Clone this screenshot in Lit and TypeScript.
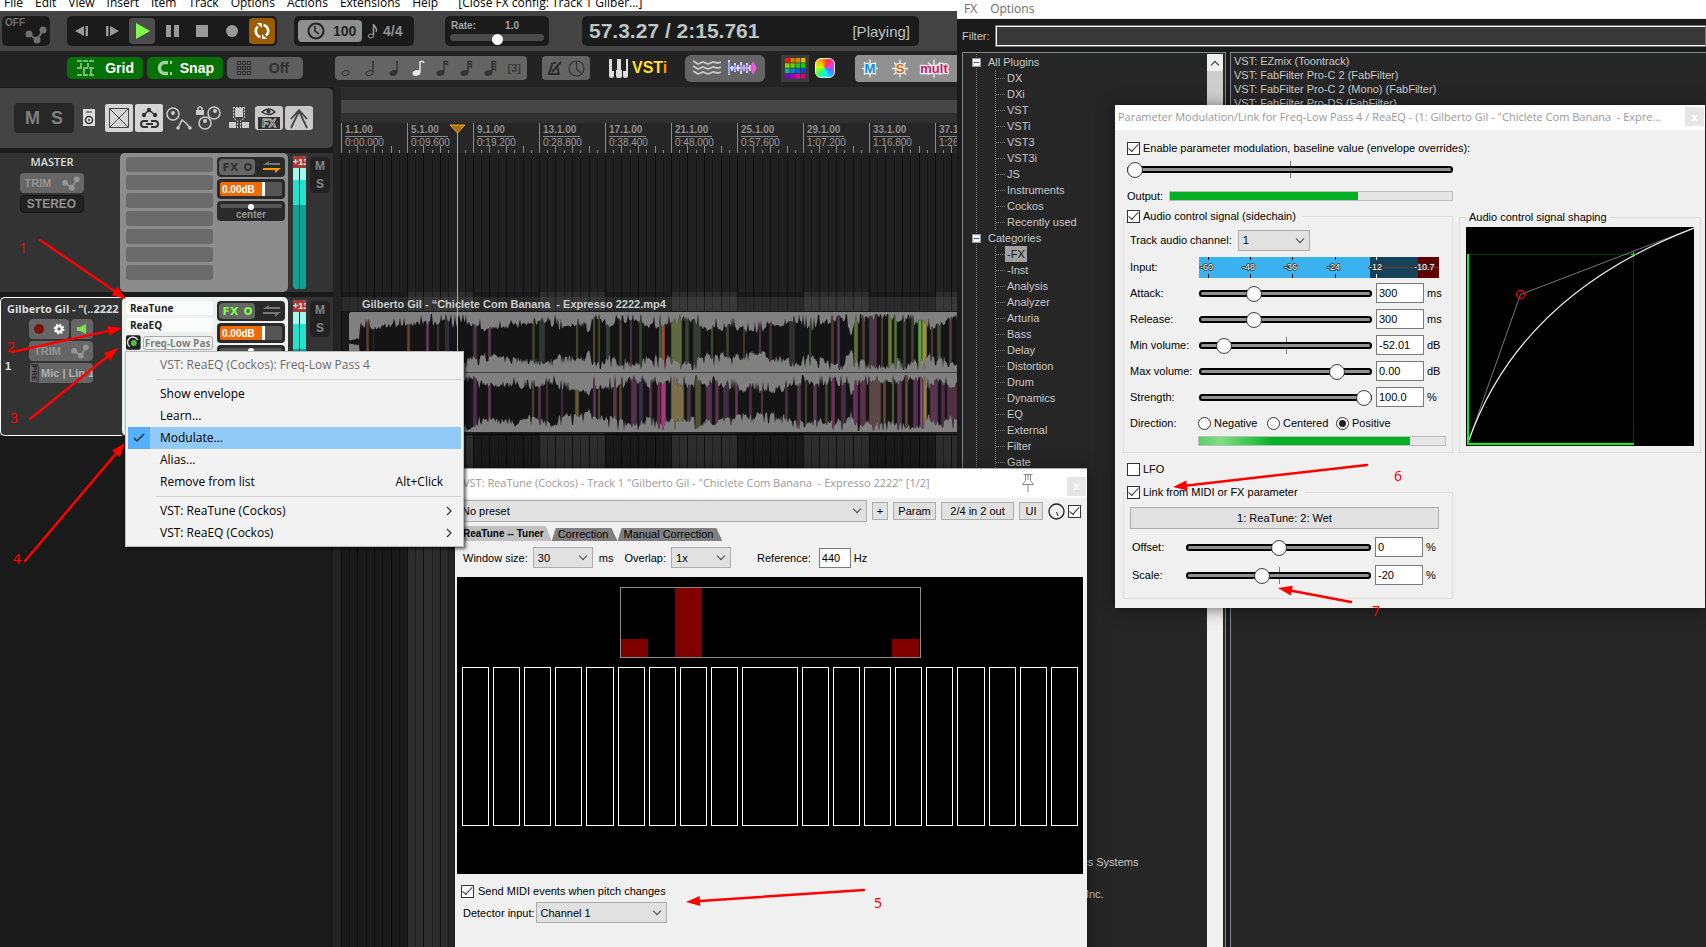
import { LitElement, html, svg, css } from "lit";
import { customElement } from "lit/decorators.js";

const uiStyles = css`
  * { box-sizing: border-box; }
  button, input, select { font: inherit; color: inherit; margin: 0; border-radius: 0; }
  button { padding: 0; border: 0; background: none; }
  .check { appearance: none; width: 13px; height: 13px; flex: none; border: 1px solid #333; background: #fff; display: grid; place-items: center; }
  .check:checked::before { content: ""; width: 4px; height: 9px; border: solid #333; border-width: 0 1px 1px 0; transform: rotate(42deg) translate(-1px, -1px); }
  .radio { appearance: none; width: 13px; height: 13px; flex: none; border: 1px solid #333; border-radius: 50%; background: #fff; display: grid; place-items: center; }
  .radio:checked::before { content: ""; width: 7px; height: 7px; border-radius: 50%; background: #222; }
  .select { position: relative; display: flex; height: 21px; }
  .select select { appearance: none; width: 100%; height: 100%; padding: 0 4px; border: 1px solid #adadad; background: #e1e1e1; }
  .select::after { content: ""; position: absolute; right: 7px; top: 6px; width: 5px; height: 5px; border: solid #444; border-width: 0 1px 1px 0; transform: rotate(45deg); pointer-events: none; }
  .field { height: 20px; width: 48px; border: 1px solid #7a7a7a; background: #fff; padding: 0 2px; }
  .push { border: 1px solid #adadad; background: #e1e1e1; }
  .range { appearance: none; width: 100%; height: 17px; background: none; display: block; }
  .range::-webkit-slider-runnable-track { height: 7px; border-radius: 4px; background: #919191; box-shadow: inset 0 0 0 2px #000; }
  .range::-webkit-slider-thumb { appearance: none; width: 16px; height: 16px; margin-top: -4px; border: 1px solid #444; border-radius: 50%; background: radial-gradient(#fff 40%, #e4e4e4); }
`;

/* ---------- waveform ---------- */

const envelope: [number, number][] = [
  [0, 2], [10, 4], [11, 22], [24, 17], [60, 22], [78, 24], [106, 24], [124, 24], [136, 17], [146, 18], [158, 19], [162, 26],
  [168, 19], [184, 20], [203, 22], [205, 28], [209, 21], [218, 18], [228, 21], [237, 17], [240, 9], [243, 25], [260, 23], [280, 28],
  [293, 24], [298, 18], [308, 24], [330, 27], [350, 25], [358, 17], [364, 23], [374, 16], [384, 22],
  [390, 16], [411, 18], [431, 18], [452, 25], [464, 21], [480, 27], [492, 26], [499, 23], [502, 10], [506, 27],
  [521, 27], [545, 27], [574, 27], [582, 18], [590, 23], [602, 22], [609, 27],
];

function noise(seed: number) {
  let s = seed;
  return () => {
    s = (s * 1664525 + 1013904223) % 4294967296;
    return s / 4294967296;
  };
}

function amplitude(x: number) {
  for (let i = 1; i < envelope.length; i++) {
    const [x1, a1] = envelope[i];
    const [x0, a0] = envelope[i - 1];
    if (x <= x1) return a0 + ((a1 - a0) * (x - x0)) / (x1 - x0);
  }
  return 24;
}

function wave(center: number, seed: number) {
  const rnd = noise(seed);
  const up: string[] = [];
  const down: string[] = [];
  let drift = 0.8;
  for (let x = 0; x <= 609; x++) {
    const a = amplitude(x);
    drift = rnd() > 0.9 ? 0.62 + rnd() * 0.38 : drift;
    const spike = rnd() > 0.86 ? 1.18 : drift + (rnd() - 0.5) * 0.24;
    const spike2 = rnd() > 0.88 ? 1.12 : drift + (rnd() - 0.6) * 0.26;
    up.push(`${x},${(center - Math.min(28, a * spike)).toFixed(1)}`);
    down.unshift(`${x},${(center + Math.min(28, a * spike2)).toFixed(1)}`);
  }
  return up.concat(down).join(" ");
}

const upper = wave(30, 11);
const lower = wave(91, 77);

type Tint = [number, number, string];
const upperTints: Tint[] = [
  [17, 3, "#6b4438"], [24, 1, "#513830"], [58, 3, "#7a4a35"], [77, 3, "#7a4070"], [88, 2, "#4a4232"], [96, 2, "#3f4030"],
  [98, 2, "#3c3a66"], [124, 4, "#553a4f"], [139, 3, "#6b4060"], [183, 3, "#44502f"], [190, 6, "#353b34"], [227, 2, "#6a5f35"],
  [244, 2, "#6a5f35"], [249, 2, "#5f5a30"], [257, 4, "#3b443a"], [270, 3, "#4e4b33"], [281, 2, "#5b3f55"], [290, 3, "#3b5038"],
  [310, 2, "#4aa04a"], [312, 4, "#b85040"], [322, 11, "#6b7848"], [336, 4, "#3e4a38"], [344, 8, "#3d4337"], [362, 2, "#4d6b3d"],
  [377, 3, "#454a3b"], [394, 2, "#55433c"], [410, 2, "#6b3f64"], [420, 3, "#52372e"], [440, 6, "#343434"], [460, 2, "#4a5b33"],
  [482, 3, "#653833"], [488, 3, "#63406b"], [505, 4, "#78803a"], [513, 3, "#574635"], [520, 8, "#553e4e"], [532, 2, "#5d5233"],
  [539, 4, "#7a8a3a"], [545, 3, "#5c8a40"], [554, 3, "#414d35"], [562, 3, "#4a4a37"], [569, 4, "#66c04a"], [573, 5, "#b0a850"],
  [582, 2, "#6a4a45"], [588, 4, "#4c5a3d"], [600, 3, "#534b4b"],
];
const lowerTints: Tint[] = [
  [17, 3, "#6b3f60"], [58, 3, "#6d4560"], [77, 3, "#704070"], [96, 3, "#4b3a66"], [124, 4, "#5c3356"], [139, 3, "#74415f"],
  [183, 2, "#5a6a36"], [189, 3, "#633a5c"], [197, 2, "#4d3f35"], [212, 2, "#54304f"], [226, 4, "#74653a"], [244, 3, "#763a70"],
  [249, 2, "#6a5f35"], [264, 4, "#6a3c48"], [270, 3, "#5d5434"], [282, 6, "#5e3658"], [290, 4, "#3f3358"], [300, 3, "#683c5d"],
  [308, 4, "#7a2a5a"], [312, 5, "#c0408a"], [322, 13, "#8c8050"], [338, 4, "#513e52"], [346, 6, "#5a5c3a"], [357, 6, "#643558"],
  [366, 4, "#683750"], [374, 6, "#4b314a"], [386, 3, "#753b64"], [400, 3, "#5e304f"], [412, 2, "#744048"], [436, 3, "#56364c"],
  [448, 4, "#613d53"], [456, 2, "#5d5634"], [464, 4, "#623c5e"], [476, 3, "#4b5130"], [482, 4, "#803560"], [492, 5, "#50304c"],
  [504, 5, "#7a3470"], [511, 6, "#693650"], [520, 12, "#6b5150"], [534, 3, "#745637"], [543, 2, "#74803a"], [548, 5, "#643b5f"],
  [556, 3, "#77503c"], [564, 5, "#663464"], [571, 3, "#b050a0"], [574, 4, "#a09848"], [581, 8, "#6b385e"], [592, 4, "#593052"],
  [598, 10, "#60364f"],
];

/* ---------- shared icons ---------- */

const nodesIcon = html`<svg width="20" height="15" viewBox="0 0 22 18" fill="none" stroke="currentColor" stroke-width="2">
  <path d="M4 8 L12 14 L18 4" /><g fill="currentColor" stroke="none"><circle cx="4" cy="8" r="3.5" /><circle cx="12" cy="14" r="3.5" /><circle cx="18" cy="4" r="3.5" /></g></svg>`;

const note = (flags: number, open = false, stem = true, color = "#333") => html`<svg width="14" height="17" viewBox="0 0 14 17" fill="none" stroke=${color}>
  <ellipse cx="4.500" cy="13" rx="3.600" ry="2.300" transform="rotate(-18 4.500 13)" fill=${open ? "none" : color} />
  ${stem ? svg`<path d="M8 12 V1" stroke-width="1.500" />` : ""}
  ${Array.from({ length: flags }, (_, i) => svg`<path d=${`M8 ${1.5 + i * 2.5} h3 l1 1.500`} stroke-width="1.300" />`)}
</svg>`;

const burst = (label: string, color: string, width: number) => html`<svg width=${width} height="21" viewBox=${`${-width / 2} -10.500 ${width} 21`}>
  <path d="M0 -9V9M-8 0H8M-6 -6L6 6M-6 6L6 -6" stroke="#eee" stroke-width="1.300" />
  <text y="4.500" text-anchor="middle" font-family="Liberation Sans" font-weight="bold" font-size="13" fill=${color} stroke="#e8e8e8" stroke-width="2.500" paint-order="stroke">${label}</text>
</svg>`;

/* ---------- track panel ---------- */

@customElement("track-strip")
class TrackStrip extends LitElement {
  static properties = { master: { type: Boolean } };
  master = false;

  static styles = [uiStyles, css`
    :host { display: flex; height: 139px; background: #333; font: bold 11px/14px "Liberation Sans", Arial, sans-serif; color: #ddd; }
    .info { width: 120px; border-radius: 5px; display: flex; flex-direction: column; align-items: center; gap: 2px; padding-top: 1px; position: relative; }
    .info.own { border: 1px solid #fff; border-right: 0; border-radius: 5px 0 0 5px; padding: 3px 0 0 6px; width: 122px; align-items: flex-start; gap: 0; }
    .title { height: 16px; line-height: 16px; font-family: "Open Sans", sans-serif; font-weight: 700; }
    .title.m { height: 17px; padding-right: 16px; font-weight: 600; }
    .plain { width: 64px; height: 20px; border-radius: 4px; background: #666; color: #959595; display: flex; align-items: center; justify-content: space-between; padding: 0 3px 0 5px; font: bold 11px "Liberation Sans", sans-serif; }
    .info:not(.own) .plain { margin-right: 17px; }
    .plain.stereo { background: #222; color: #909090; height: 18px; justify-content: center; border: 1px solid #151515; font-size: 12px; padding: 0; }
    .stack { display: flex; flex-direction: column; gap: 2px; margin: 2px 0 0 22px; }
    .pair { display: flex; gap: 2px; }
    .plain.rec { width: 40px; padding: 0 4px; }
    .plain.spk { width: 22px; padding: 0 5px; }
    .pre { writing-mode: vertical-rl; font: bold 8px/8px "Liberation Sans", sans-serif; border: 1px solid #333; border-radius: 2px; height: 19px; width: 10px; color: #222; text-align: center; flex: none; }
    .plain.mic { padding: 0 1px 0 0; justify-content: flex-start; gap: 2px; color: #b0b0b0; white-space: nowrap; overflow: hidden; }
    .num { position: absolute; left: 4px; top: 61px; font-size: 11px; }
    .fx { width: 168px; border-radius: 5px; background: #8c8c8c; padding: 4px 3px 0 6px; display: flex; justify-content: space-between; align-items: flex-start; }
    .fx.own { width: 166px; background: #ecf0ef; padding: 4px 3px 0 4px; }
    .slots { display: flex; flex-direction: column; gap: 3px; width: 87px; }
    .slot { display: block; width: 100%; height: 15px; border-radius: 3px; background: #6b6b6b; text-align: left; }
    .own .slot { height: 14px; background: #fafcfb; color: #222; padding-left: 4px; font: bold 10px/14px "Open Sans", sans-serif; }
    .param { display: flex; gap: 2px; align-items: center; }
    .own .param .slot { width: 72px; border: 1px solid #aaa; color: #808080; padding: 0 0 0 1px; background: #f0f2f1; overflow: hidden; white-space: nowrap; line-height: 12px; }
    .ctl { display: flex; flex-direction: column; gap: 2px; width: 68px; }
    .box { height: 20px; border-radius: 4px; background: #2a2a2a; display: flex; align-items: center; padding: 2px 3px 2px 2px; justify-content: space-between; }
    .fxo { width: 36px; height: 16px; border-radius: 4px; background: #666; color: #333; display: flex; align-items: center; justify-content: center; gap: 5px; font: bold 11px "DejaVu Sans", sans-serif; }
    .fxo.on { color: #7dff4a; }
    .ring { width: 8px; height: 8px; border: 2px solid currentColor; border-radius: 50%; }
    .vol { padding: 3px; justify-content: flex-start; }
    .vol b { background: #ee6a05; color: #fff; width: 42px; height: 14px; line-height: 15px; padding-left: 2px; font-size: 10px; border-radius: 2px 0 0 2px; }
    .vol i { width: 3px; height: 14px; background: #fff; }
    .vol u { flex: 1; height: 14px; background: #555; border-radius: 0 2px 2px 0; }
    .pan { display: block; padding: 3px; text-align: center; color: #959595; font: bold 10px/14px "Liberation Sans", sans-serif; }
    .rail { height: 4px; border-radius: 2px; background: #555; display: grid; place-items: center; }
    .rail::before { content: ""; width: 6px; height: 6px; border-radius: 50%; background: #fff; }
    .meter { width: 13px; height: 133px; margin: 3px 4px 0 5px; border-radius: 3px; overflow: hidden; background: linear-gradient(90deg, transparent 6px, #14302e 6px, #14302e 7px, transparent 7px), linear-gradient(#a5f8ef 24px, #1fe5d0 24px, #1fe5d0 49px, #0aa396 49px); }
    .peak { display: block; height: 12px; background: #a93b33; color: #eee; font: bold 9px/12px "Liberation Sans", sans-serif; overflow: hidden; }
    .ms { width: 20px; height: 36px; margin-top: 4px; border-radius: 4px; background: #222; color: #858585; display: grid; font: bold 12px/16px "Liberation Sans", sans-serif; place-items: center; }
  `];

  render() {
    const own = this.master ? "" : "own";
    return html`
      <div class="info ${own}">
        ${this.master
          ? html`<span class="title m">MASTER</span>
              <button class="plain">TRIM ${nodesIcon}</button>
              <button class="plain stereo">STEREO</button>`
          : html`<span class="title">Gilberto Gil - “(..2222</span>
              <span class="num">1</span>
              <div class="stack">
                <div class="pair">
                  <button class="plain rec" aria-label="Record arm"><svg width="32" height="14" viewBox="0 0 32 14"><circle cx="6" cy="7" r="5" fill="#7b1208" /><circle cx="26" cy="7" r="3" fill="none" stroke="#fff" stroke-width="2.400" /><circle cx="26" cy="7" r="4.600" fill="none" stroke="#fff" stroke-width="1.600" stroke-dasharray="1.800 1.800" /></svg></button>
                  <button class="plain spk" aria-label="Monitor"><svg width="12" height="12" viewBox="0 0 12 12"><path d="M1 4 h3 L10 1 V11 L4 8 H1Z" fill="#7be04d" /></svg></button>
                </div>
                <button class="plain">TRIM ${nodesIcon}</button>
                <button class="plain mic"><span class="pre">PRE</span>Mic | Lin 1</button>
              </div>`}
      </div>
      <div class="fx ${own}">
        <div class="slots">
          ${this.master
            ? Array.from({ length: 7 }, () => html`<button class="slot" aria-label="Empty slot"></button>`)
            : html`<button class="slot">ReaTune</button><button class="slot">ReaEQ</button>
                <div class="param"><svg width="15" height="15" viewBox="0 0 15 15"><rect width="15" height="15" rx="2" fill="#222" /><path d="M4 12 A5.500 5.500 0 1 1 12 5" fill="none" stroke="#ddd" stroke-width="1.500" /><circle cx="8" cy="8" r="3" fill="#4ec83a" /></svg><button class="slot">Freq-Low Pas</button></div>`}
        </div>
        <div class="ctl">
          <div class="box"><button class="fxo ${this.master ? "" : "on"}">FX<span class="ring"></span></button>
            <svg width="20" height="14" viewBox="0 0 20 14"><path d="M1 5 L7 1 V3 H18 V5Z" fill="#777" /><path d="M1 8 H19 L13 13 V10 H1Z" fill=${this.master ? "#f90" : "#777"} /></svg>
          </div>
          <div class="box vol"><b>0.00dB</b><i></i><u></u></div>
          <div class="box pan"><div class="rail"></div>${this.master ? "center" : ""}</div>
        </div>
      </div>
      <div class="meter"><span class="peak">+13</span></div>
      <div class="ms"><span>M</span><span>S</span></div>
    `;
  }
}

/* ---------- main DAW window ---------- */

@customElement("daw-window")
class DawWindow extends LitElement {
  static styles = [uiStyles, css`
    :host { display: flex; flex-direction: column; min-width: 0; overflow: hidden; background: #1a1a1a; font-family: "Liberation Sans", Arial, sans-serif; }
    .menu { height: 11px; background: #fff; display: flex; align-items: flex-end; gap: 12px; padding-left: 4px; overflow: hidden; font: 12px/16px "Open Sans", sans-serif; color: #000; white-space: nowrap; flex: none; }
    .menu .note { margin-left: 8px; }
    .transport { height: 40px; background: #444; display: flex; align-items: flex-start; padding: 5px 0 0 2px; flex: none; }
    .panel { height: 30px; background: #1b1b1b; border-radius: 5px; display: flex; align-items: center; color: #a3a3a3; flex: none; }
    .auto { width: 48px; font: bold 10px/10px "Liberation Sans", sans-serif; color: #707070; padding: 2px 3px; align-items: flex-start; justify-content: space-between; }
    .auto svg { width: 22px; height: 18px; margin: 8px 0 0 -10px; flex: none; }
    .keys { width: 210px; margin-left: 17px; padding: 0 2px; gap: 4px; }
    .key { width: 26px; height: 26px; display: grid; place-items: center; border-radius: 4px; color: #999; }
    .key.play { background: #4c4c4c; }
    .key.loop { background: #9a5c05; }
    .bpm { width: 120px; margin-left: 17px; padding-left: 4px; }
    .tempo { width: 64px; height: 22px; background: #8f8f8f; border-radius: 4px; display: flex; align-items: center; gap: 8px; padding-left: 9px; font: bold 14px "Liberation Sans", sans-serif; color: #222; }
    .sig { font-size: 14px; margin-left: 4px; font-weight: bold; color: #909090; }
    .bpm svg.n { margin-left: 5px; }
    .rate { width: 104px; margin-left: 31px; display: block; padding: 3px 5px; font: bold 10px/13px "Liberation Sans", sans-serif; }
    .rate p { margin: 0 25px 0 1px; display: flex; justify-content: space-between; }
    .rail { height: 7px; border-radius: 4px; background: #4a4a4a; display: grid; place-items: center; margin-top: 2px; }
    .rail::before { content: ""; width: 11px; height: 11px; border-radius: 50%; background: #fff; }
    .clock { flex: 0 1 337px; margin-left: 33px; padding: 0 9px 0 7px; justify-content: space-between; color: #bcc4c4; }
    .time { font: bold 21px "Liberation Sans", sans-serif; }
    .state { font-size: 15px; }
    .tools { height: 36px; background: #232323; display: flex; align-items: center; flex: none; padding: 0 0 2px 67px; }
    .tool { width: 76px; height: 22px; border-radius: 5px; display: flex; align-items: center; justify-content: space-between; padding: 0 9px 0 10px; margin-right: 4px; font: bold 14px "Liberation Sans", sans-serif; color: #fff; background: #067206; flex: none; }
    .tool.off { background: #5e5e5e; color: #303030; padding-right: 14px; }
    .set { height: 24px; border-radius: 4px; background: #646464; display: flex; align-items: center; flex: none; }
    .notes { width: 192px; margin-left: 28px; padding: 0 6px; justify-content: space-between; color: #3a3a3a; font: bold 11px "Liberation Sans", sans-serif; }
    .metro { width: 48px; margin-left: 15px; justify-content: space-evenly; }
    .vsti { margin-left: 19px; display: flex; align-items: center; gap: 3px; font: bold 16px "Liberation Sans", sans-serif; color: #ffdf30; width: 59px; flex: none; }
    .vsti em { color: #f90; font-style: normal; }
    .env { width: 80px; height: 27px; margin-left: 17px; justify-content: space-evenly; border-radius: 6px; }
    .pal { width: 28px; height: 27px; background: #3c3c3c; margin-left: 16px; display: grid; place-items: center; flex: none; }
    .wheel { width: 20px; height: 20px; border-radius: 6px; margin: 0 20px 0 6px; flex: none; background: conic-gradient(from 20deg, #f33, #e3f, #48f, #0ff, #3f6, #cf0, #fa0, #f33); border: 1px solid #eee; }
    .solo { width: 130px; height: 27px; background: #909090; gap: 8px; padding-left: 4px; }
    .body { flex: 1; display: grid; grid-template-columns: 333px minmax(0, 1fr); column-gap: 8px; background: #232323; min-height: 0; }
    .tcp { display: flex; flex-direction: column; gap: 5px; background: #1a1a1a; overflow: hidden; padding-top: 1px; min-height: 0; }
    .head { height: 60px; background: #444; border-radius: 0 5px 5px 0; display: flex; align-items: center; padding-left: 14px; flex: none; }
    track-strip { flex: none; }
    .mix { width: 60px; height: 30px; border-radius: 4px; background: #272727; color: #808080; font: bold 18px "Liberation Sans", sans-serif; display: flex; align-items: center; justify-content: space-evenly; }
    .arr { display: flex; flex-direction: column; min-width: 0; overflow: hidden; position: relative; }
    .b1 { height: 13px; background: #2b2b2b; } .b2 { height: 13px; background: #464646; } .b3 { height: 10px; background: #303030; }
    .b1, .b2, .b3 { flex: none; }
    .ruler { height: 30px; background: #262626; display: flex; flex: none; position: relative; }
    .mark { width: 66px; flex: none; border-left: 1px solid #8a8a8a; padding: 1px 0 0 3px; font: bold 10px/12px "Liberation Sans", sans-serif; color: #8f8f8f; }
    .mark span { display: block; width: 37px; border-bottom: 1px solid #858585; white-space: nowrap; }
    .mark small { font-size: 10px; line-height: 12px; display: block; font-weight: normal; color: #9a9a9a; }
    .ticks { position: absolute; left: 0; bottom: 0; width: 100%; height: 7px; }
    .lanes { flex: 1; position: relative; min-height: 0; }
    .grid { position: absolute; inset: 0; width: 100%; height: 100%; }
    .track { position: relative; padding-top: 144px; }
    .name { height: 14px; padding-left: 21px; font: bold 11px/15px "Liberation Sans", sans-serif; color: #c8ccca; white-space: pre; background: rgba(90, 90, 90, .25); }
    .item { height: 122px; margin-left: 7px; background: #808080; border: solid #1a1a1a; border-width: 1px 0 1px 1px; overflow: hidden; border-radius: 3px 0 0 0; }
    .item svg { display: block; }
    .cursor { position: absolute; left: 108px; top: 37px; width: 17px; height: 830px; pointer-events: none; }
  `];

  render() {
    return html`
      <nav class="menu">${["File", "Edit", "View", "Insert", "Item", "Track", "Options", "Actions", "Extensions", "Help"].map((t) => html`<span>${t}</span>`)}<span class="note">[Close FX config: Track 1 Gilber...]</span></nav>
      <div class="transport">
        <div class="panel auto">OFF ${nodesIcon}</div>
        <div class="panel keys">
          <button class="key" aria-label="Start"><svg width="14" height="12" viewBox="0 0 14 12" fill="currentColor"><path d="M9 1 V11 L0 6Z M10.500 1 h2.500 V11 h-2.500Z" /></svg></button>
          <button class="key" aria-label="End"><svg width="14" height="12" viewBox="0 0 14 12" fill="currentColor"><path d="M5 1 V11 L14 6Z M1 1 h2.500 V11 h-2.500Z" /></svg></button>
          <button class="key play" aria-label="Play"><svg width="16" height="16" viewBox="0 0 16 16"><path d="M2 0 L16 8 L2 16Z" fill="#7dff4a" /></svg></button>
          <button class="key" aria-label="Pause"><svg width="13" height="12" viewBox="0 0 13 12" fill="currentColor"><path d="M0 0h5v12H0Z M8 0h5v12H8Z" /></svg></button>
          <button class="key" aria-label="Stop"><svg width="12" height="12"><rect width="12" height="12" fill="#999" /></svg></button>
          <button class="key" aria-label="Record"><svg width="12" height="12"><circle cx="6" cy="6" r="6" fill="#999" /></svg></button>
          <button class="key loop" aria-label="Repeat"><svg width="18" height="18" viewBox="0 0 18 18" fill="none" stroke="#fff" stroke-width="2.600"><path d="M7.500 15 A6 6 0 0 1 5 4.500 M10.500 3 A6 6 0 0 1 13 13.500" /><path d="M4 1 h5 v5z M14 17 h-5 v-5z" fill="#fff" stroke="none" /></svg></button>
        </div>
        <div class="panel bpm">
          <span class="tempo"><svg width="18" height="18" viewBox="0 0 18 18" fill="none" stroke="#222" stroke-width="2"><circle cx="9" cy="9" r="7.500" /><path d="M8 4 V9 L12 12" stroke-width="1.500" /></svg>100</span>
          <svg class="n" width="12" height="17" viewBox="0 0 12 17" fill="none" stroke="#999"><ellipse cx="4" cy="13" rx="2.800" ry="2" /><path d="M6.500 12 V1 C7 4 11 5 9 9" stroke-width="1.500" /></svg>
          <span class="sig">4/4</span>
        </div>
        <div class="panel rate"><p><span>Rate:</span><span>1.0</span></p><div class="rail"></div></div>
        <div class="panel clock"><span class="time">57.3.27 / 2:15.761</span><span class="state">[Playing]</span></div>
      </div>
      <div class="tools">
        <button class="tool"><svg width="17" height="16" viewBox="0 0 17 16" fill="none" stroke="#9fd49f" stroke-width="1.500"><path d="M0 1H17M0 8H17M0 15H17" stroke-dasharray="5 1" /><path d="M4 3v4M11 3v4M7 9v5M14 9v5" /></svg>Grid</button>
        <button class="tool"><svg width="17" height="16" viewBox="0 0 17 16" fill="none" stroke="#9fd49f" stroke-width="3.500"><path d="M11 2.500 H8 A5.500 5.500 0 0 0 8 13.500 H11" /><path d="M13 2.500h3M13 13.500h3" stroke-width="3" stroke-dasharray="2 1" /></svg>Snap</button>
        <button class="tool off"><svg width="15" height="15" viewBox="0 0 15 15" fill="none" stroke="#2c2c2c">${[1, 6, 11].map((y) => [1, 6, 11].map((x) => svg`<rect x=${x - 0.5} y=${y - 0.5} width="3" height="3" />`))}</svg>Off</button>
        <div class="set notes">${note(0, true, false)}${note(0, true)}${note(0)}${note(1, false, true, "#e8e8e8")}${note(2)}${note(3)}${note(4)}<span>[3]</span></div>
        <div class="set metro"><svg width="16" height="16" viewBox="0 0 16 16" fill="none" stroke="#2c2c2c" stroke-width="2"><path d="M5.500 3 L2 14 H12 L10 7 M6 3h3 M5 12 L14 2" /></svg><svg width="17" height="17" viewBox="0 0 17 17" fill="none" stroke="#333" stroke-width="1.200"><circle cx="8.500" cy="8.500" r="7.500" /><path d="M8.500 2 V9 L13 13" /></svg></div>
        <div class="vsti"><svg width="20" height="19" viewBox="0 0 20 19" fill="#ddd"><path d="M0 0h3v12h2v5q0 2-2.500 2T0 17Z M8 0h4v11h1v6q0 2-3 2t-3-2v-6h1Z M17 0h2v17q0 2-2.500 2T14 17v-5h3Z" /></svg><span>VST<em>i</em></span></div>
        <div class="set env">
          <svg width="28" height="17" viewBox="0 0 28 17" fill="none" stroke="#c8c8c8" stroke-width="1.800">${[3, 8, 13].map((y) => svg`<path d=${`M0 ${y - 2} l5 3 5-2 5 2 5-2 5 1 3-1`} />`)}</svg>
          <svg width="29" height="20" viewBox="0 0 29 20"><path d="M1 2v15M4 8v5M7 5v9M10 7v6M13 4v12M16 7v6M19 5v10M22 7v6M0 10h28" stroke="#d9cfff" stroke-width="2" /><path d="M1 4v12M7 7v6" stroke="#48f" /><path d="M13 7v6M16 8v4M19 7v6" stroke="#86e" /><path d="M25 3 L29 10 L25 17 L22 10Z" fill="#e05fd0" /></svg>
        </div>
        <div class="pal"><svg width="21" height="21" viewBox="0 0 21 21">${["#f11", "#d70", "#d80", "#db0", "#9c0", "#6c0", "#2c2", "#0d0", "#0b8", "#08c", "#06d", "#04e", "#70d", "#a0c", "#e0a", "#d06"].map((c, i) => svg`<rect x=${(i % 4) * 5.3} y=${Math.floor(i / 4) * 5.3} width="4.500" height="4.500" fill=${c} />`)}</svg></div>
        <div class="wheel"></div>
        <div class="set solo">${burst("M", "#0f8be0", 22)}${burst("S", "#c36d10", 22)}${burst("mult", "#c52169", 30)}${burst("✕", "#c52130", 14)}</div>
      </div>
      <div class="body">
        <div class="tcp">
          <div class="head">
            <div class="mix"><span>M</span><span>S</span></div>
            <svg width="245" height="32" viewBox="0 0 245 32" fill="none">
              <rect x="9" y="7" width="12" height="17" fill="#ddd" /><path d="M12 10h6" stroke="#333" /><circle cx="15" cy="18" r="3.500" stroke="#333" stroke-width="1.500" /><circle cx="15" cy="18" r="1" fill="#333" />
              <rect x="31" y="2" width="28" height="28" rx="2" fill="#d5d5d5" /><path d="M35.500 6.500h19v19h-19z M35.500 6.500l19 19 M54.500 6.500l-19 19" stroke="#444" />
              <rect x="61" y="2" width="28" height="28" rx="2" fill="#d5d5d5" /><path d="M70 13l5-5 6 5" stroke="#333" stroke-width="1.500" /><g fill="#333"><circle cx="70" cy="13" r="2.200" /><circle cx="75" cy="8" r="2.200" /><circle cx="81" cy="13" r="2.200" /></g><path d="M74 19h-4a3 3 0 0 0 0 6h4 M77 19h4a3 3 0 0 1 0 6h-4 M72 22h7" stroke="#333" stroke-width="2" />
              <g stroke="#ccc" stroke-width="1.500"><circle cx="99" cy="12" r="6" /><path d="M104 26l4-8 4 3 4 5" /><circle cx="131" cy="21" r="6" /><circle cx="140" cy="11" r="6" /><path d="M124 9v-3q2-2.500 4 0v3" /></g><g fill="#ccc"><circle cx="99" cy="11" r="2" /><circle cx="131" cy="19" r="2" /><circle cx="141" cy="9" r="2" /><rect x="122" y="8" width="8" height="5" /><circle cx="104" cy="26" r="1.800" /><circle cx="116" cy="26" r="1.800" /></g>
              <g fill="#ccc"><rect x="161" y="6" width="8" height="9" /><rect x="155" y="20" width="7" height="6" /><rect x="168" y="20" width="7" height="6" /></g><path d="M159.500 5v11l4 3v7 M170.500 5v11l-4 3v7 M159 5.500h12" stroke="#ccc" stroke-dasharray="2 1" />
              <rect x="181" y="4" width="28" height="24" rx="3" fill="#c8c8c8" /><rect x="184" y="15" width="22" height="12" fill="#333" /><path d="M188 10q7-6 13 0q-6 5-13 0Z" stroke="#333" stroke-width="1.500" /><circle cx="194.500" cy="9.500" r="2" fill="#333" />
              <text x="188" y="25" font-size="11" font-weight="bold" fill="#333" stroke="#bbb" stroke-width=".8" font-family="Liberation Sans">FX</text>
              <rect x="211" y="4" width="28" height="24" rx="3" fill="#c8c8c8" /><path d="M217 17 L225 8 L233 17 M217 26 L225 9 L233 26" stroke="#444" stroke-width="1.800" />
            </svg>
          </div>
          <track-strip master></track-strip>
          <track-strip></track-strip>
        </div>
        <div class="arr">
          <div class="b1"></div><div class="b2"></div><div class="b3"></div>
          <div class="ruler">
            ${[["1.1.00", "0:00.000"], ["5.1.00", "0:09.600"], ["9.1.00", "0:19.200"], ["13.1.00", "0:28.800"], ["17.1.00", "0:38.400"], ["21.1.00", "0:48.000"], ["25.1.00", "0:57.600"], ["29.1.00", "1:07.200"], ["33.1.00", "1:16.800"], ["37.1.00", "1:26.400"]].map(([a, b]) => html`<div class="mark"><span>${a}</span><small>${b}</small></div>`)}
            <svg class="ticks"><defs><pattern id="t" width="66" height="7" patternUnits="userSpaceOnUse"><path d="M8.500 4v3M25.500 4v3M41.500 4v3M58.500 4v3M16.500 0v7M33.500 0v7M50.500 0v7" stroke="#8a8a8a" /></pattern></defs><rect width="100%" height="7" fill="url(#t)" /></svg>
          </div>
          <div class="lanes">
            <svg class="grid">
              <defs>
                <pattern id="bars" width="66" height="10" patternUnits="userSpaceOnUse"><path d="M8.500 0v10M25.500 0v10M41.500 0v10M58.500 0v10" stroke="#000" stroke-opacity=".28" /><path d="M.500 0v10M16.500 0v10M33.500 0v10M50.500 0v10" stroke="#000" stroke-opacity=".62" /></pattern>
                <pattern id="bands" width="132" height="10" patternUnits="userSpaceOnUse"><rect width="66" height="10" fill="#1a1a1a" /><rect x="66" width="66" height="10" fill="#2d2d2d" /></pattern>
              </defs>
              <rect width="100%" height="139" fill="#202020" /><rect y="139" width="100%" height="900" fill="url(#bands)" /><rect width="100%" height="100%" fill="url(#bars)" />
              <path d="M0 281.500H700" stroke="#000" />
            </svg>
            <div class="track">
              <div class="name">Gilberto Gil - “Chiclete Com Banana  - Expresso 2222.mp4</div>
              <div class="item">
                <svg width="609" height="120" viewBox="0 0 609 120">
                  <defs><clipPath id="u"><polygon points=${upper} /></clipPath><clipPath id="l"><polygon points=${lower} /></clipPath></defs>
                  <polygon points=${upper} fill="#141414" /><polygon points=${lower} fill="#141414" />
                  <g clip-path="url(#u)" opacity=".85">${upperTints.map(([x, w, c]) => svg`<rect x=${x} y="2" width=${w} height="55" fill=${c} /><path d=${`M${x} 2V57M${x + w} 2V57`} stroke="#222" stroke-width=".6" />`)}</g>
                  <g clip-path="url(#l)" opacity=".85">${lowerTints.map(([x, w, c]) => svg`<rect x=${x} y="63" width=${w} height="56" fill=${c} /><path d=${`M${x} 63V119M${x + w} 63V119`} stroke="#222" stroke-width=".6" />`)}</g>
                  <path d="M0 60.500H609" stroke="#444" />
                </svg>
              </div>
            </div>
          </div>
          <svg class="cursor" viewBox="0 0 17 830"><path d="M8.500 8V830" stroke="#f5a21c" /><path d="M1 1H16L8.500 9Z" fill="#a9701a" stroke="#f5a21c" /></svg>
        </div>
      </div>
    `;
  }
}

/* ---------- FX browser ---------- */

@customElement("fx-browser")
class FxBrowser extends LitElement {
  static styles = [uiStyles, css`
    :host { display: flex; flex-direction: column; min-width: 0; overflow: hidden; background: #1b1b1b; font: 11px/16px "Liberation Sans", Arial, sans-serif; color: #c8c8c8; }
    .menu { height: 19px; flex: none; background: #fff; border-bottom: 1px solid #eee; display: flex; gap: 13px; padding-left: 7px; color: #6d6d6d; font: 12px/17px "Open Sans", sans-serif; }
    .filter { display: flex; align-items: center; gap: 5px; padding: 6px 0 5px 5px; height: 33px; flex: none; }
    .filter input { flex: 1; height: 22px; min-width: 0; background: #383838; border: 2px solid #fff; outline: 1px solid #777; outline-offset: -1px; border-right: 0; }
    .panes { flex: 1; display: flex; gap: 4px; padding-left: 5px; min-height: 0; }
    .tree { width: 264px; border: 1px solid #828790; border-bottom: 0; background: #262626; display: flex; justify-content: space-between; padding: 1px 2px 0 9px; overflow: hidden; }
    ul { list-style: none; margin: 0; padding: 0; }
    .top { display: flex; align-items: center; height: 16px; gap: 7px; }
    .box { width: 9px; height: 9px; background: #fff; border: 1px solid #999; display: grid; place-items: center; }
    .box::before { content: ""; width: 5px; height: 1px; background: #35a; }
    .root { background: repeating-linear-gradient(#777 0 1px, transparent 1px 2px) 4px 0 / 1px 100% no-repeat; }
    .kids { margin-left: 23px; border-left: 1px dotted #777; }
    .kids li { height: 16px; display: flex; align-items: center; white-space: nowrap; }
    .kids li::before { content: ""; width: 9px; border-top: 1px dotted #777; }
    .kids li span { padding: 0 2px; }
    .kids li.gap::before { visibility: hidden; }
    .sel span { background: #a0a0a0; color: #111; }
    .bar { width: 16px; background: linear-gradient(#f0f0f0 17px, #cdcdcd 17px, #cdcdcd 330px, #f0f0f0 330px); position: relative; }
    .bar::before { content: ""; position: absolute; left: 5px; top: 8px; width: 5px; height: 5px; border: solid #333; border-width: 1px 0 0 1px; transform: rotate(45deg); }
    .list { flex: 1; min-width: 0; border: 1px solid #828790; border-right: 0; border-bottom: 0; background: #262626; padding: 1px 3px; line-height: 14px; white-space: nowrap; }
  `];

  render() {
    const plugins = ["DX", "DXi", "VST", "VSTi", "VST3", "VST3i", "JS", "Instruments", "Cockos", "Recently used"];
    const cats = ["-FX", "-Inst", "Analysis", "Analyzer", "Arturia", "Bass", "Delay", "Distortion", "Drum", "Dynamics", "EQ", "External", "Filter", "Gate", ...Array(24).fill(""), "Applied Acoustics Systems", "", "Audio Damage, Inc.", "", "", ""];
    return html`
      <nav class="menu"><span>FX</span><span>Options</span></nav>
      <div class="filter"><label for="f">Filter:</label><input id="f" type="text" /></div>
      <div class="panes">
        <div class="tree">
          <ul>
            <li class="root"><div class="top"><span class="box"></span>All Plugins</div><ul class="kids">${plugins.map((p) => html`<li><span>${p}</span></li>`)}</ul></li>
            <li class="root"><div class="top"><span class="box"></span>Categories</div><ul class="kids">${cats.map((p, i) => html`<li class=${i === 0 ? "sel" : p ? "" : "gap"}><span>${p}</span></li>`)}</ul></li>
          </ul>
          <div class="bar"></div>
        </div>
        <div class="list">${["VST: EZmix (Toontrack)", "VST: FabFilter Pro-C 2 (FabFilter)", "VST: FabFilter Pro-C 2 (Mono) (FabFilter)", "VST: FabFilter Pro-DS (FabFilter)"].map((t) => html`<div>${t}</div>`)}</div>
      </div>
    `;
  }
}

/* ---------- ReaTune window ---------- */

@customElement("tuner-window")
class TunerWindow extends LitElement {
  static styles = [uiStyles, css`
    :host { display: flex; flex-direction: column; background: #f0f0f0; font: 11px/14px "Liberation Sans", Arial, sans-serif; color: #000; box-shadow: 0 2px 14px rgba(0, 0, 0, .5); border-top: 1px solid #aaa; }
    .title { height: 29px; background: #fff; display: flex; align-items: center; padding: 0 1px 2px 8px; font: 11px/20px "Open Sans", sans-serif; color: #999; white-space: pre; }
    .title span { flex: 1; overflow: hidden; }
    .x { width: 19px; height: 19px; margin: 7px 0 0 31px; background: #e6e6e6; color: #fff; font: bold 11px "Liberation Sans", sans-serif; }
    .preset { display: flex; align-items: center; padding: 2px 6px 0 0; gap: 5px; }
    .preset .select { flex: 1; height: 22px; }
    .preset .select select { padding-left: 6px; }
    .preset button { height: 18px; }
    .w1 { width: 16px; } .w2 { width: 43px; } .w3 { width: 73px; } .w4 { width: 24px; }
    .preset .check { margin-left: -2px; }
    .tabs { display: flex; align-items: flex-end; height: 16px; margin-top: 3px; }
    .tabs button { height: 13px; line-height: 13px; background: #808080; padding: 0 9px 0 6px; clip-path: polygon(4px 0, calc(100% - 6px) 0, 100% 100%, 0 100%); }
    .tabs .on { height: 15px; background: #c0c0c0; font: bold 10px/15px "Liberation Sans", sans-serif; padding: 0 8px; clip-path: polygon(0 0, calc(100% - 6px) 0, 100% 100%, 0 100%); }
    .opts { display: flex; align-items: center; padding-left: 8px; height: 21px; margin: 6px 0 9px; }
    .opts .select { width: 60px; margin: 0 6px 0 5px; }
    .opts .ov { margin-left: 11px; }
    .opts .rf { margin: 0 8px 0 20px; }
    .opts .field { width: 32px; margin-right: 3px; }
    .view { margin: 0 4px 0 2px; background: #000; height: 297px; padding: 10px 5px 0; display: flex; flex-direction: column; align-items: center; gap: 9px; }
    .hist { width: 301px; height: 71px; border: 1px solid #8a8a8a; display: grid; grid-template-columns: repeat(11, 1fr); align-items: end; flex: none; }
    .hist i { background: #800000; }
    .low { height: 18px; } .high { height: 100%; }
    .keys { width: 100%; height: 159px; display: flex; gap: 4px; }
    .keys i { flex: 27 1 0; border: 1px solid #fff; }
    .keys i.wide { flex-grow: 58; }
    .foot { display: flex; align-items: center; gap: 4px; padding-left: 6px; }
    .foot.a { margin-top: 10px; height: 14px; }
    .foot.b { margin-top: 4px; padding-left: 8px; gap: 1px; }
    .foot.b .select { width: 131px; }
  `];

  render() {
    return html`
      <div class="title"><span>VST: ReaTune (Cockos) - Track 1 "Gilberto Gil - "Chiclete Com Banana  - Expresso 2222" [1/2]</span>
        <svg width="16" height="20" viewBox="0 0 16 20" fill="none" stroke="#888"><path d="M3.500 1.500h9M5.500 1.500v6l-3 4h11l-3-4v-6M8 11.500V19M8 2v5" /></svg><button class="x" aria-label="Close">x</button></div>
      <div class="preset">
        <div class="select"><select aria-label="Preset"><option>No preset</option></select></div>
        <button class="push w1">+</button><button class="push w2">Param</button><button class="push w3">2/4 in 2 out</button><button class="push w4">UI</button>
        <svg width="17" height="17" viewBox="0 0 17 17" fill="none" stroke="#222"><circle cx="8.500" cy="8.500" r="7.500" stroke-width="1.300" /><path d="M8.500 9l1.500 4" /></svg>
        <input class="check" type="checkbox" checked aria-label="Enabled" />
      </div>
      <div class="tabs"><button class="on">ReaTune -- Tuner</button><button>Correction</button><button>Manual Correction</button></div>
      <div class="opts">
        <label for="ws">Window size:</label><div class="select"><select id="ws"><option>30</option></select></div>ms
        <label class="ov" for="ov">Overlap:</label><div class="select"><select id="ov"><option>1x</option></select></div>
        <label class="rf" for="rf">Reference:</label><input class="field" id="rf" .value=${"440"} />Hz
      </div>
      <div class="view">
        <div class="hist"><i class="low"></i><b></b><i class="high"></i><b></b><b></b><b></b><b></b><b></b><b></b><b></b><i class="low"></i></div>
        <div class="keys">${Array.from({ length: 19 }, (_, i) => html`<i class=${i === 9 ? "wide" : ""}></i>`)}</div>
      </div>
      <div class="foot a"><input class="check" id="sm" type="checkbox" checked /><label for="sm">Send MIDI events when pitch changes</label></div>
      <div class="foot b"><label for="di">Detector input:</label><div class="select"><select id="di"><option>Channel 1</option></select></div></div>
    `;
  }
}

/* ---------- parameter modulation dialog ---------- */

@customElement("modulation-dialog")
class ModulationDialog extends LitElement {
  static styles = [uiStyles, css`
    :host { display: block; background: #f0f0f0; font: 11px/14px "Liberation Sans", Arial, sans-serif; color: #000; box-shadow: 0 2px 14px rgba(0, 0, 0, .5); }
    .title { height: 25px; background: #fff; display: flex; align-items: center; justify-content: space-between; padding: 0 1px 2px 3px; font: 11px/20px "Open Sans", sans-serif; color: #999; white-space: pre; }
    .title span { flex: 1; overflow: hidden; text-overflow: ellipsis; }
    .x { width: 19px; height: 19px; margin-left: 2px; background: #e6e6e6; color: #fff; font: bold 11px "Liberation Sans", sans-serif; }
    .body { display: grid; grid-template-columns: 330px minmax(0, 1fr); gap: 6px; padding: 11px 4px 9px 8px; }
    .tick { display: flex; align-items: center; gap: 3px; height: 14px; white-space: nowrap; }
    .in { margin-left: 4px; }
    .main { margin: 6px 0 11px 4px; }
    .slider { position: relative; }
    .mid::before { content: ""; position: absolute; left: 50%; top: 0; width: 1px; height: 17px; background: #777; }
    .mid .range { position: relative; }
    .out { display: flex; align-items: center; height: 14px; gap: 6px; margin: 0 0 6px 4px; }
    .bar { height: 10px; border: 1px solid #bcbcbc; background: #e6e6e6; display: flex; }
    .out .bar { flex: 1; }
    .bar i { background: #06b025; }
    .o { width: 66.6%; }
    .bar .d { width: 85.6%; background: linear-gradient(90deg, #55d066, #80e080 10%, #06b025 35%); }
    fieldset { margin: 0; padding: 6px 6px 0; border: 1px solid #dcdcdc; min-width: 0; }
    legend { padding: 0 7px 0 3px; margin-left: -6px; height: 14px; }
    legend.s { padding: 0 3px; margin-left: 0; }
    .line { display: flex; align-items: center; height: 22px; margin-bottom: 3px; }
    .line .select { width: 72px; margin-left: 6px; }
    .row { display: grid; grid-template-columns: 69px 173px 48px auto; align-items: center; height: 26px; }
    .row > :nth-child(3) { margin-left: 4px; }
    .row > :nth-child(4) { margin-left: 7px; }
    .meter { width: 240px; height: 21px; display: block; }
    .dir { display: flex; height: 26px; align-items: center; }
    .dir > span:first-child { width: 68px; }
    .dir label { display: flex; align-items: center; gap: 3px; width: 69px; }
    .dbar { width: 248px; margin: 0 0 6px 68px; }
    .lfo { margin: 9px 0 9px 4px; }
    .link { padding-bottom: 9px; padding-top: 8px; }
    .wet { width: 309px; height: 22px; display: block; margin-bottom: 4px; }
    .link .row { grid-template-columns: 54px 185px 48px auto; height: 28px; padding-left: 2px; }
    .right { padding-top: 69px; }
    .right fieldset { padding: 3px 6px 6px; }
    .curve { display: block; width: 100%; height: 219px; background: #000; }
  `];

  row(id: string, label: string, pos: number, value: string, unit: string, mid = false) {
    return html`<div class="row"><label for=${id}>${label}</label>
      <div class="slider ${mid ? "mid" : ""}"><input class="range" type="range" min="0" max="1000" .value=${String(pos)} aria-label=${label} /></div>
      <input class="field" id=${id} .value=${value} /><span>${unit}</span></div>`;
  }

  render() {
    return html`
      <div class="title"><span>Parameter Modulation/Link for Freq-Low Pass 4 / ReaEQ - (1: Gilberto Gil - "Chiclete Com Banana  - Expre...</span><button class="x" aria-label="Close">x</button></div>
      <div class="body">
        <div>
          <div class="tick in"><input class="check" id="en" type="checkbox" checked /><label for="en">Enable parameter modulation, baseline value (envelope overrides):</label></div>
          <div class="slider mid main"><input class="range" type="range" min="0" max="1000" .value=${"0"} aria-label="Baseline" /></div>
          <div class="out">Output:<div class="bar"><i class="o"></i></div></div>
          <fieldset>
            <legend class="tick"><input class="check" id="ac" type="checkbox" checked /><label for="ac">Audio control signal (sidechain)</label></legend>
            <div class="line"><label for="ch">Track audio channel:</label><div class="select"><select id="ch"><option>1</option></select></div></div>
            <div class="row"><span>Input:</span>
              <svg class="meter" viewBox="0 0 240 21"><rect width="171" height="21" fill="#3bb2f0" /><rect x="171" width="48" height="21" fill="#15445a" /><rect x="219" width="21" height="21" fill="#600000" /><path d="M171 10.500H240" stroke="#733" />
                ${[9, 51, 93, 136, 177].map((x) => svg`<path d=${`M${x}.500 0v3M${x}.500 17v4`} stroke=${x < 170 ? "#000" : "#fff"} />`)}
                <g font-family="Liberation Sans" font-size="9" fill="#fff" stroke="#333" stroke-width="1.600" paint-order="stroke"><text x="1" y="13">-60</text><text x="43" y="13">-48</text><text x="85" y="13">-36</text><text x="128" y="13">-24</text><text x="170" y="13">-12</text><text x="215" y="13">-10.7</text></g>
              </svg></div>
            ${this.row("at", "Attack:", 300, "300", "ms")}
            ${this.row("re", "Release:", 300, "300", "ms")}
            ${this.row("mi", "Min volume:", 108, "-52.01", "dB", true)}
            ${this.row("ma", "Max volume:", 828, "0.00", "dB")}
            ${this.row("st", "Strength:", 1000, "100.0", "%")}
            <div class="dir"><span>Direction:</span>
              <label><input class="radio" type="radio" name="dir" />Negative</label><label><input class="radio" type="radio" name="dir" />Centered</label><label><input class="radio" type="radio" name="dir" checked />Positive</label></div>
            <div class="bar dbar"><i class="d"></i></div>
          </fieldset>
          <div class="tick lfo"><input class="check" id="lfo" type="checkbox" /><label for="lfo">LFO</label></div>
          <fieldset class="link">
            <legend class="tick"><input class="check" id="lk" type="checkbox" checked /><label for="lk">Link from MIDI or FX parameter</label></legend>
            <button class="push wet">1: ReaTune: 2: Wet</button>
            ${this.row("of", "Offset:", 500, "0", "%")}
            ${this.row("sc", "Scale:", 400, "-20", "%", true)}
          </fieldset>
        </div>
        <div class="right">
          <fieldset>
            <legend class="s">Audio control signal shaping</legend>
            <svg class="curve" viewBox="0 0 228 219" preserveAspectRatio="none" fill="none">
              <path d="M1 27.500H167.500V216" stroke="#083c08" /><path d="M3 213L54.500 67.500L228 1" stroke="#777" /><path d="M3 213Q54.500 67.500 228 1" stroke="#eee" stroke-width="1.200" />
              <path d="M2 27V217H168" stroke="#0f0" stroke-width="2" /><path d="M165 27.500h5M167.500 25v5" stroke="#0f0" /><circle cx="54.500" cy="67.500" r="4" stroke="#e00" stroke-width="1.300" />
            </svg>
          </fieldset>
        </div>
      </div>
    `;
  }
}

/* ---------- desktop ---------- */

@customElement("app-root")
class AppRoot extends LitElement {
  static styles = [uiStyles, css`
    :host { display: grid; grid-template-columns: minmax(0, 957fr) minmax(0, 749fr); height: 100vh; min-height: 600px; position: relative; overflow: hidden; }
    tuner-window { position: absolute; left: 455px; top: 468px; width: 632px; height: 520px; }
    modulation-dialog { position: absolute; left: 1115px; top: 105px; width: 590px; }
    .ctx { position: absolute; left: 125px; top: 351px; width: 339px; background: #f2f2f2; border: 1px solid #bbb; padding: 2px; box-shadow: 2px 2px 3px rgba(0, 0, 0, .6); font: 12px/22px "Open Sans", sans-serif; color: #000; }
    .ctx button { display: flex; width: 100%; height: 22px; align-items: center; padding: 0 9px 0 0; text-align: left; }
    .ctx button svg { flex: none; }
    .mark { width: 22px; height: 22px; margin-right: 10px; display: grid; place-items: center; }
    .ctx .hot { background: #91c9f7; }
    .hot .mark { background: #56b0fa; }
    .lbl { flex: 1; }
    .ctx .head { color: #6d6d6d; }
    .keyhint { padding-right: 9px; }
    hr { margin: 3px 0 3px 28px; border: 0; border-top: 1px solid #d0d0d0; }
    .notes { position: absolute; left: 0; top: 0; width: 1706px; height: 947px; pointer-events: none; }
  `];

  arrow(x1: number, y1: number, x2: number, y2: number) {
    const a = Math.atan2(y2 - y1, x2 - x1);
    const p = (d: number, s: number) => `${(x2 - Math.cos(a) * d - Math.sin(a) * s).toFixed(1)},${(y2 - Math.sin(a) * d + Math.cos(a) * s).toFixed(1)}`;
    return svg`<path d=${`M${x1} ${y1}L${p(10, 0)}`} stroke="#f00" stroke-width="2.500" stroke-linecap="round" /><polygon points=${`${x2},${y2} ${p(14, 5)} ${p(14, -5)}`} fill="#f00" />`;
  }

  render() {
    const chevron = html`<svg width="6" height="10" viewBox="0 0 6 10" fill="none" stroke="#333" stroke-width="1.200"><path d="M1 1l4 4-4 4" /></svg>`;
    const item = (t: string, extra: unknown = "") => html`<button><span class="mark"></span><span class="lbl">${t}</span>${extra}</button>`;
    const labels: [string, number, number][] = [["1", 19, 253], ["2", 7, 352], ["3", 10, 423], ["4", 13, 564], ["5", 874, 908], ["6", 1394, 481], ["7", 1372, 616]];
    return html`
      <daw-window></daw-window>
      <fx-browser></fx-browser>
      <tuner-window></tuner-window>
      <modulation-dialog></modulation-dialog>
      <div class="ctx">
        <button class="head"><span class="mark"></span><span class="lbl">VST: ReaEQ (Cockos): Freq-Low Pass 4</span></button>
        <hr />
        ${item("Show envelope")}${item("Learn...")}
        <button class="hot"><span class="mark"><svg width="12" height="10" viewBox="0 0 12 10" fill="none" stroke="#234" stroke-width="1.500"><path d="M1 5l3 3 7-7" /></svg></span><span class="lbl">Modulate...</span></button>
        ${item("Alias...")}${item("Remove from list", html`<span class="keyhint">Alt+Click</span>`)}
        <hr />
        ${item("VST: ReaTune (Cockos)", chevron)}${item("VST: ReaEQ (Cockos)", chevron)}
      </div>
      <svg class="notes" viewBox="0 0 1706 947">
        ${this.arrow(40, 240, 126, 299)}${this.arrow(12, 352, 122, 328)}${this.arrow(30, 419, 118, 348)}${this.arrow(25, 561, 125, 443)}
        ${this.arrow(864, 890, 686, 902)}${this.arrow(1367, 465, 1173, 487)}${this.arrow(1351, 602, 1278, 588)}
        <g font-family="Noto Sans, sans-serif" font-size="14" fill="#f00">${labels.map(([t, x, y]) => svg`<text x=${x} y=${y}>${t}</text>`)}</g>
      </svg>
    `;
  }
}
